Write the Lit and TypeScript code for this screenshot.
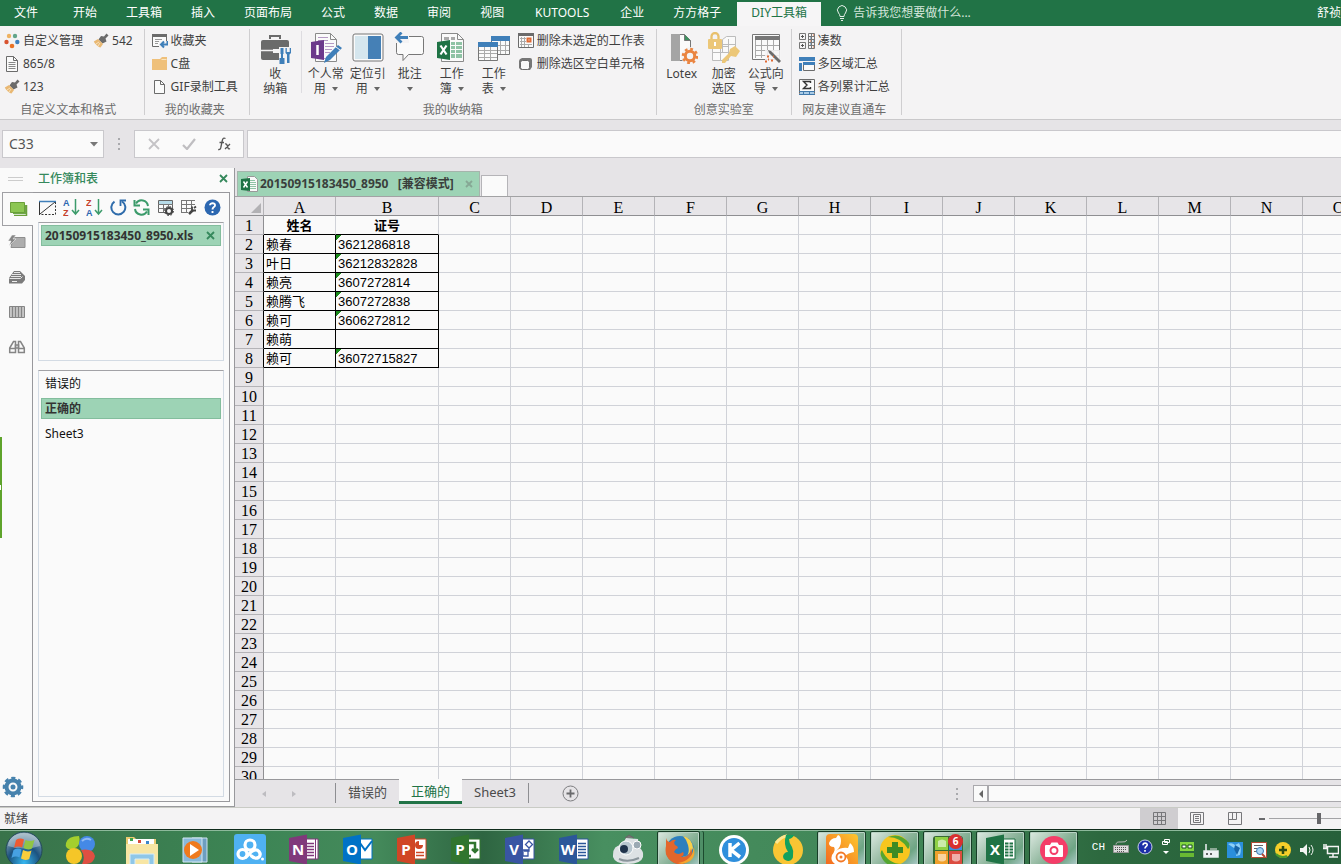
import { LitElement, html, css, svg, TemplateResult } from "lit";
import { customElement, state } from "lit/decorators.js";
import { classMap } from "lit/directives/class-map.js";

type Art = TemplateResult;

/** Wraps icon strokes in a square or rectangular SVG canvas. */
const icon = (w: number, h: number, body: unknown): Art =>
  html`<svg class="ico" width=${w} height=${h} viewBox="0 0 ${w} ${h}" aria-hidden="true">${body}</svg>`;

const GREY = "#6b6b6b";
const BLUE = "#3f7fb9";

/* ---------- small ribbon icons ---------- */
const dots = icon(16, 16, svg`
  <circle cx="5" cy="3" r="2.2" fill="#eeb262"/><circle cx="11" cy="3" r="2.2" fill="#62a58a"/>
  <circle cx="2.5" cy="9" r="2.2" fill="#d8532f"/><circle cx="8" cy="13" r="2.3" fill="#ea7326"/>
  <circle cx="13.3" cy="9" r="2.2" fill="#3f82bf"/>`);
const brush = icon(16, 16, svg`
  <path d="M13.5 0.5l2 2-3 3 1 3-4 2-4-4 2.500-3.500 3 .5z" fill="#6b6b6b"/>
  <path d="M5 6l5 5-2.500 3.500C5 14 2 11 .8 8.500z" fill="#e9b873"/><path d="M3 11l3-2M5 13l2-3" stroke="#f8e2bd"/>`);
const page = icon(16, 16, svg`
  <path d="M2.500 .5h7l4 4v11h-11z" fill="#fafafa" stroke=${GREY}/><path d="M9.500 .5v4h4" fill="none" stroke=${GREY}/>
  <path d="M4.500 6.500h7M4.500 8.500h7M4.500 10.500h7M4.500 12.500h7" stroke="#888"/>`);
const blank = icon(16, 16, svg`
  <path d="M2.500 1.500h6l4 4v9h-10z" fill="#fafafa" stroke=${GREY}/><path d="M8.500 1.500v4h4" fill="none" stroke=${GREY}/>`);
const fav = icon(16, 16, svg`
  <path d="M.5 1.500h14v12H.5z" fill="#fafafa" stroke=${GREY}/><path d="M0 1h15v3H0z" fill=${GREY}/>
  <path d="M3 6.500h7M3 8.500h5M3 10.500h3" stroke="#999"/><path d="M7 8h9v8H7z" fill="#f4f3f4"/>
  <path d="M15.500 8v3.500H9M12 8.500l-3 3 3 3" fill="none" stroke=${BLUE} stroke-width="2"/>`);
const folder = icon(16, 16, svg`<path d="M0 3h8l2-2h5v13H0z" fill="#efc07a"/><path d="M9.500 3.500h5" stroke="#fae4bf"/>`);
const calDel = icon(16, 16, svg`
  <path d="M.5 .5h15v14H.5z" fill="#fafafa" stroke=${GREY}/><path d="M0 0h16v3H0z" fill=${GREY}/>
  <path d="M2 5.500h6M2 8.500h6M2 11.500h12M3.500 4v10M6.500 4v10M10.500 11v3" stroke="#aaa"/><path d="M9.500 5.500h3v3h-3z" fill="#fff" stroke="#e06a35" stroke-width="2"/>`);
const cube = icon(16, 16, svg`
  <path d="M1 5q0-2 3-3h8q2 0 2 2v7l-2 3H3l-2-2z" fill="#777"/><rect x="2.500" y="4.500" width="9" height="9" rx="2" fill="#fafafa" stroke=${GREY}/>`);
const calc4 = icon(16, 16, svg`
  <g fill="none" stroke="#777"><path d="M.5 .5h6v6h-6zM.5 9.500h6v6h-6zM9.500 .5h6v15h-6zM9.500 3.500h6M9.500 6.500h6M9.500 9.500h6M9.500 12.500h6M12.500 .5v15"/></g>
  <path d="M2 3.500h3M3.500 2v3M2 12.500h3M3.500 11v3" stroke="#555"/>
  <path d="M11 5h1M14 8h1M11 11h1" stroke=${BLUE}/><path d="M14 2h1M11 8h1M14 14h1" stroke="#e06a35"/>`);
const areas = icon(16, 16, svg`
  <path d="M0 1h16v4H0zM0 7h3v8H0z" fill=${BLUE}/><path d="M4.500 7.500h11v7h-11z" fill="#fafafa" stroke=${GREY}/><path d="M4 6h12v3H4z" fill=${BLUE}/>`);
const sigma = icon(16, 16, svg`
  <path d="M.5 .5h15v14H.5z" fill="#fafafa" stroke=${GREY}/><path d="M1 12h14v3H1z" fill="#a9cbe6"/><path d="M0 12.500h16M0 15.500h16M4.500 12v4M10.500 12v4" stroke="#4179ab"/>
  <path d="M11.500 4V2.500h-7L8 6 4.500 9.500h7V8" fill="none" stroke="#333" stroke-width="1.400"/>`);

/* ---------- large ribbon icons ---------- */
const toolbox = icon(32, 32, svg`
  <path d="M11 7V4h10v3" fill="none" stroke=${GREY} stroke-width="2"/><rect x="2" y="8" width="28" height="20" rx="2" fill=${GREY}/>
  <path d="M2 18.500h29" stroke="#f4f3f4" stroke-width="1.500"/><path d="M14 17h6v4h-6z" fill="#f4f3f4"/>
  <path d="M20 15h12v17H20z" fill="#f4f3f4"/>
  <path d="M21.500 16h3v6h-.5v4h1.500v6h-5v-6H22v-4h-.5z" fill=${BLUE}/><path d="M26.500 16v5l1.500 1.500V31h2.500v-8.500L32 21v-5h-1.300v4h-2.900v-4z" fill=${BLUE}/>`);
const notePen = icon(32, 32, svg`
  <path d="M5.500 1.500h15l6 6v22h-21z" fill="#fafafa" stroke="#8a8a8a"/><path d="M20.500 1.500v6h6" fill="none" stroke="#8a8a8a"/>
  <path d="M8 5.500h10M8 8.500h10M15 11.500h9M15 14.500h9M15 17.500h7M15 20.500h5M8 26.500h8" stroke="#b59ac4"/>
  <path d="M1 10l13-2v20l-13-2z" fill="#6c3a8c"/><path d="M7.500 13v10" stroke="#fff" stroke-width="2.500"/>
  <path d="M14 31l2-6 12-12 4 3-12 12z" fill=${BLUE}/><path d="M26 15l4 3" stroke="#f4f3f4"/>`);
const pane = icon(32, 32, svg`
  <rect x="1" y="2" width="30" height="27" rx="2" fill="#fafafa" stroke="#777"/><path d="M3 4h13v23H3z" fill="#d5e6ee"/><path d="M16 4h13v23H16z" fill="#4580b6"/>`);
const comment = icon(32, 32, svg`
  <path d="M5 4.500h22.500a2 2 0 0 1 2 2v14a2 2 0 0 1-2 2H14.500l-5.500 6v-6H4.500a2 2 0 0 1-2-2V7z" fill="#fafafa" stroke="#777"/>
  <path d="M0 0h15v11H0z" fill="#f4f3f4"/><path d="M14 5.500H3M7.500 .5l-5 5 5 5" fill="none" stroke=${BLUE} stroke-width="2.800"/>`);
const excelPage = icon(32, 32, svg`
  <path d="M5.500 1.500h16l6 6v22h-22z" fill="#fafafa" stroke="#8a8a8a"/><path d="M21.500 1.500v6h6" fill="none" stroke="#8a8a8a"/>
  <path d="M8 5h5v3H8zM15 5h4v3h-4z" fill="#aaa"/>
  <g fill="#8fc3a5"><path d="M15 10h4v3h-4zM20 10h6v3h-6zM15 14h4v3h-4zM20 14h6v3h-6zM15 18h4v3h-4zM20 18h6v3h-6zM15 22h4v4h-4zM20 22h6v4h-6z"/></g>
  <path d="M1 10l13-2v20l-13-2z" fill="#1f7345"/><path d="M4.500 13.500l6 9M10.500 13.500l-6 9" stroke="#fff" stroke-width="2.200"/>`);
const tables = icon(32, 32, svg`
  <path d="M13.500 4.500h18v18h-18z" fill="#fafafa" stroke="#777"/><path d="M13 4h19v5H13z" fill=${BLUE}/>
  <path d="M14 13.500h17M14 18.500h17M22.500 9v13M27.500 9v13" stroke="#aaa"/>
  <path d="M.5 10.500h19v18H.5z" fill="#fafafa" stroke="#777"/><path d="M0 10h20v5H0z" fill=${BLUE}/>
  <path d="M1 18.500h18M1 21.500h18M1 25.500h18M6.500 15v13M12.500 15v13" stroke="#aaa"/>`);
const lotex = icon(32, 32, svg`
  <path d="M5.500 2.500h13l6 6v20h-19z" fill="#fafafa" stroke="#777"/><path d="M5 2h9v27H5z" fill="#a5a5a5"/><path d="M18.500 2.500v6h6" fill="#3e9160" stroke="#777"/>
  <circle cx="24" cy="24" r="9" fill="#f4f3f4"/>
  <circle cx="24" cy="24" r="4.700" fill="none" stroke="#ea8440" stroke-width="3"/>
  <circle cx="24" cy="24" r="7" fill="none" stroke="#ea8440" stroke-width="2.500" stroke-dasharray="2.750 2.750"/>`);
const lockKey = icon(32, 32, svg`
  <g fill="#fafafa" stroke="#bcbcbc"><path d="M4.500 14.500h8v6h-8zM12.500 14.500h8v6h-8zM4.500 20.500h8v8h-8zM12.500 20.500h8v8h-8zM14.500 7.500l4-3h9v13l-4 3h-9zM20.500 7v13M14 12.500h13"/></g>
  <path d="M3.500 9V4.500a3.500 3.500 0 0 1 7 0V9" fill="none" stroke="#e8c06c" stroke-width="2.300"/><rect x="0" y="7" width="14" height="10" rx="1" fill="#ecc778"/><path d="M7 10v4" stroke="#fff" stroke-width="2"/>
  <path d="M22 17l5-3 5 5-4 6-5-1-6 7h-3v-3l7-7z" fill="#ecc778"/>`);
const wizard = icon(32, 32, svg`
  <path d="M2.500 2.500h27v25h-27z" fill="#fafafa" stroke="#777"/><path d="M5 4h24v4H5z" fill="#777"/>
  <path d="M5 13.500h24M5 18.500h24M5 23.500h24M5.500 8v18M11.500 8v18M17.500 8v18M23.500 8v18" stroke="#aaa"/>
  <path d="M15 18h16v14H15z" fill="#f4f3f4" opacity=".85"/><path d="M18 18l3 1 10 10-2 2-10-10z" fill=${GREY}/>
  <path d="M17 24.500h2M21 28.500h2M15 29.500h2M23 24.500h1M18 27.500h1" stroke="#e06a35" stroke-width="2"/>`);

/* ---------- side panel icons ---------- */
const sheets = icon(18, 14, svg`<path d="M3 3h13v9H3z" fill="#6fa84a"/><path d="M.500 .500h14v10H.500z" fill="#8cc653" stroke="#6a9f3a"/><path d="M16.500 3v10.500H4" fill="none" stroke="#6a9f3a" stroke-width="1.500"/>`);
const auto = icon(18, 14, svg`<path d="M5 2.500h12v10H3z" fill="#adadad" stroke="#8e8e8e"/><path d="M4 0l4 0-3 4h3L1 11l2-5H0z" fill="#868686" stroke="#fafafa" stroke-width=".5"/>`);
const stack = icon(18, 14, svg`<path d="M1 8l5-7h6l5 5v4l-3 3.500H1z" fill="#7b7b7b"/><path d="M1.500 8.500h11l2-2M3 6.500h10M4 4.500h9M6 2.500h6" fill="none" stroke="#e6e6e6"/><path d="M4 11.500h5" stroke="#eee"/>`);
const cols = icon(18, 14, svg`<path d="M1.500 1.500h15v11h-15z" fill="#c6c6c6" stroke="#858585"/><path d="M4.500 1v12M7.500 1v12M10.500 1v12M13.500 1v12" stroke="#858585" stroke-width="1.200"/>`);
const binoc = icon(18, 14, svg`<g fill="none" stroke="#858585" stroke-width="1.500"><path d="M5.500 1.500h2v11H1.700V8zM12.500 1.500h-2v11h5.800V8z"/><path d="M7.500 5h3v3h-3zM2 8.500h5M11 8.500h5"/></g>`);
const gear = icon(22, 22, svg`<circle cx="11" cy="11" r="6.500" fill="#fafafa" stroke="#4682ad" stroke-width="4"/><circle cx="11" cy="11" r="9" fill="none" stroke="#4682ad" stroke-width="2.600" stroke-dasharray="4.070 3" stroke-dashoffset="2"/><circle cx="11" cy="11" r="2.500" fill="#4682ad"/>`);

const rectDash = icon(17, 16, svg`<path d="M.500 15V1.500h16" fill="none" stroke="#333"/><path d="M16.500 2v12.500H1" fill="none" stroke="#333" stroke-dasharray="2 1.500"/><path d="M1 14L16 2" stroke="#333"/><path d="M0 1.500h17" stroke=${BLUE} stroke-width="1.500"/>`);
const sortIcon = (a: string, b: string, ca: string, cb: string) => icon(17, 21, svg`
  <text x="0" y="9" class="az" fill=${ca}>${a}</text><text x="0" y="19" class="az" fill=${cb}>${b}</text>
  <path d="M12.500 2v15M9 13l3.500 4 3.500-4" fill="none" stroke="#3c9b6b" stroke-width="1.500"/>`);
const undo = icon(17, 17, svg`<path d="M4.500 2.600A7 7 0 1 0 12 2.500" fill="none" stroke="#2f6cab" stroke-width="2"/><path d="M10.500 7V1.500H16" fill="none" stroke="#2f6cab" stroke-width="1.800"/>`);
const refresh = icon(17, 17, svg`<g fill="none" stroke="#3c9b6b" stroke-width="2"><path d="M15 7A6.500 6.500 0 0 0 3 4.500M2 10a6.500 6.500 0 0 0 12 2.500"/><path d="M1.500 1v5.500H7M15.500 16v-5.500H10"/></g>`);
const tblGear = icon(17, 17, svg`<path d="M1.500 1.500h14v12h-14z" fill="#fafafa" stroke="#666"/><path d="M2 2h13v3H2z" fill="#b7dbe8"/><path d="M1 5.500h15M1 9.500h10M6.500 5v8M11.500 5v3" stroke="#777"/><circle cx="12" cy="12" r="3" fill="#fafafa" stroke="#444" stroke-width="2"/><circle cx="12" cy="12" r="4.500" fill="none" stroke="#444" stroke-dasharray="1.760 1.760"/>`);
const tblTool = icon(17, 17, svg`<path d="M1 1.500h14M1 5.500h14M1 9.500h10M1 13.500h7M1.500 1v13M6.500 1v12M11.500 1v8" stroke="#777"/><path d="M9 15l4-4" stroke="#444" stroke-width="2.500"/><path d="M12 7.500l0 4 4 0M16 7.500l-2 1.500" stroke="#444" stroke-width="1.800" fill="none"/>`);
const help = icon(17, 17, svg`<circle cx="8.500" cy="8.500" r="8" fill="#2c67b0"/><path d="M6 6.300C6 3.500 11.300 3.500 11 6.500 10.800 8.300 8.500 8 8.500 10.500M8.500 12v2" fill="none" stroke="#fff" stroke-width="1.900"/>`);
const cross = (c: string, s: number) => icon(s, s, svg`<path d="M1 1l${s - 2} ${s - 2}M${s - 1} 1L1 ${s - 1}" stroke=${c} stroke-width="1.800"/>`);
const xlsTab = icon(17, 16, svg`<path d="M6.500 .5h7l3 3v12h-10z" fill="#fafafa" stroke="#999"/><path d="M9 4.500h5M9 6.500h6M9 8.500h6M9 10.500h6M9 12.500h6" stroke="#8fc3a5"/><path d="M0 3l9-1v13l-9-1z" fill="#1f7345"/><path d="M2.500 5.500l4 6M6.500 5.500l-4 6" stroke="#fff" stroke-width="1.500"/>`);

/* ---------- taskbar icons ---------- */
const office = (letter: string, color: string, art: unknown) => icon(30, 32, svg`
  <path d="M14 5h15v20H14z" fill="#fff" stroke=${color}/>${art}
  <path d="M0 4l18-3.500v30L0 27z" fill=${color}/><text x="9" y="21" class="letter" fill="#fff">${letter}</text>`);
const orb = icon(38, 38, svg`
  <defs><radialGradient id="orb" cx=".5" cy=".85" r=".8"><stop offset="0" stop-color="#35b7f0"/><stop offset=".55" stop-color="#1c527f"/><stop offset="1" stop-color="#8ca5b4"/></radialGradient></defs>
  <circle cx="19" cy="19" r="18" fill="url(#orb)" stroke="#21485a"/><path d="M3 15a16 13 0 0 1 32 0q-16 5-32 0z" fill="#dbe9ee" opacity=".4"/>
  <path d="M11 9q4-2.500 8-.5l-2 8q-4-2-8 .5z" fill="#ee5a32"/><path d="M20.500 9q4 2 9 0l-2.500 8.500q-4 2-8.500-.5z" fill="#91c544"/>
  <path d="M8.500 19q4-2.500 8-.5l-2 8q-4-2-8 .5z" fill="#47a1e2"/><path d="M18 19q4.500 2.500 8.500 .5l-2.300 8.500q-4 2-8.200-.5z" fill="#fbce3c"/>`);
const balls = icon(32, 32, svg`<path d="M2 9q2-7 13-7 2 7-2 11-6 4-10 1-2-2-1-5z" fill="#a4cf2e"/><circle cx="23" cy="10" r="8" fill="#4489e6"/><circle cx="10" cy="22" r="8" fill="#f5c628"/><path d="M17 16q12-2 14 6-1 9-13 8 4-7-1-14z" fill="#df4f42"/><path d="M18 7q4-4 9-1" stroke="#8fbaf4" stroke-width="2" fill="none"/>`);
const explorer = icon(34, 34, svg`<path d="M1 3h8l2 2h20v26H1z" fill="#e9ca70"/><path d="M3 5h26v5H3z" fill="#fff"/><path d="M5 4h3v3H5z" fill="#3da54c"/><path d="M13 6h3v3h-3z" fill="#d64b3c"/><path d="M21 7h3v3h-3z" fill="#3c86cb"/><path d="M1 10h32v21H1z" fill="#f8e6a4"/><path d="M5 31V20h24v11h-5v-6H10v6z" fill="#8fc7e8" stroke="#d7edf7"/>`);
const player = icon(32, 32, svg`<path d="M12 4h15v24H12z" fill="#6d9ec0" stroke="#cfe2ee"/><path d="M3 4h19v24H3z" fill="#8ab9da" stroke="#d5e8f2"/><circle cx="13" cy="16" r="9" fill="#ef7a1d"/><path d="M10 10l9 6-9 6z" fill="#fff"/>`);
const cloud = icon(32, 32, svg`<rect width="32" height="34" rx="3" fill="#4fb1f2"/><g fill="none" stroke="#fff" stroke-width="3.200" stroke-linecap="round"><circle cx="16" cy="11" r="5"/><circle cx="8.500" cy="20" r="4.500"/><path d="M12 23l5-5q5-4 8-.5 2.500 3.500-.5 6-3.500 2-7-1.500"/></g><circle cx="28.500" cy="25" r="1.500" fill="#fff"/>`);
const robot = icon(32, 32, svg`<path d="M1 21q0-10 9-10l4-7 12 1 1 8q5 4 4 10-2 7-15 7T1 23z" fill="#dde1e4"/><circle cx="14" cy="14" r="7" fill="#b8c6cf" stroke="#fff"/><circle cx="12" cy="15" r="4" fill="#20334c"/><circle cx="25" cy="11" r="4" fill="#9caab4" stroke="#fff"/><path d="M13 4l4-3 5 3" stroke="#666" fill="#777"/><path d="M7 25q9 4 20-1" stroke="#8a949b" stroke-width="2" fill="none"/>`);
const firefox = icon(32, 32, svg`<circle cx="17" cy="16" r="14" fill="#2d7fbe"/><path d="M20 2q9 2 10 12-3 8-11 9 9 0 6-12-1-5-5-9z" fill="#f6cf4c"/><path d="M3 4q1 4 4 4 3-3 6-2-3 2-1 5 3 1 3 3-3 1-4 4 4 4 9 0 2 3-2 5 9 1 10-9 3 9-4 14-8 5-16-1Q1 22 3 12z" fill="#e3662a"/><path d="M26 24q4-3 4.500-11 3 9-3.500 14-6 4-12 2 7-1 11-5z" fill="#f5a52d"/>`);
const kugou = icon(32, 32, svg`<circle cx="16" cy="16" r="15" fill="#fff"/><circle cx="16" cy="16" r="12" fill="#2f8fdc"/><path d="M12 9v14M21.500 9L13 16l9 7" fill="none" stroke="#fff" stroke-width="3.500"/>`);
const music = icon(32, 32, svg`<circle cx="16" cy="16" r="15" fill="#f9c534"/><path d="M4 9q6-7 11-7" stroke="#fde68f" stroke-width="3" fill="none"/><path d="M14 1h8q-1 3-5 4 0 4 3 8 2 4 1 9a5 4.500 0 1 1-5-4Q11 11 14 1z" fill="#13a05e"/>`);
const squirrel = icon(32, 32, svg`<defs><linearGradient id="uc" x1="0" y1="1" x2="1" y2="0"><stop offset="0" stop-color="#f3641f"/><stop offset="1" stop-color="#fdc72e"/></linearGradient></defs><rect width="32" height="34" rx="4" fill="url(#uc)"/><path d="M3 9q2-5 7-5l2-3q3 1 3 6 0 6-5 10 5-4 12-3l2-5q4 3 4 9-6 1-9 4 4 3 3 8H9q-5-3-3-9 4-5 2-8-5 0-5-4z" fill="#fff"/><circle cx="15" cy="23" r="4.500" fill="none" stroke="#f37a28" stroke-width="1.800"/><circle cx="15" cy="23" r="1.500" fill="#f37a28"/>`);
const plusBall = icon(32, 32, svg`<circle cx="16" cy="16" r="15" fill="#f7c61e"/><path d="M9 3q12-5 21 6 1 4-1 6-7-12-20-12zM23 30Q8 36 2 22q-1-4 1-6 6 14 20 14z" fill="#55a630"/><path d="M13 8h6v5h5v6h-5v5h-6v-5H8v-6h5z" fill="#3d8b24"/>`);
const squares = icon(32, 32, svg`<rect x="1" y="2" width="30" height="29" rx="3" fill="#386b35"/><rect x="3" y="3" width="13" height="13" fill="#8fd045"/><rect x="17" y="3" width="13" height="13" fill="#3d8de0"/><rect x="3" y="17" width="13" height="13" fill="#f0a02c"/><rect x="17" y="17" width="13" height="13" fill="#dc4c40"/><path d="M6 7q4-3 8 0v6H6zM6 20h8v6q-4 3-8 0zM20 20h8v6q-4 3-8 0z" fill="#fff" opacity=".55"/>`);
const camera = icon(32, 32, svg`<circle cx="16" cy="16" r="14" fill="#f43d68"/><path d="M8 11h4l1.500-2.500h6L21 11h3a1 1 0 0 1 1 1v10a1 1 0 0 1-1 1H8a1 1 0 0 1-1-1V12a1 1 0 0 1 1-1z" fill="#fff"/><circle cx="16" cy="16.500" r="3.500" fill="#fff" stroke="#f43d68" stroke-width="2"/>`);

const lines = svg`<path d="M19 9.500h8M19 12.500h8M19 15.500h8M19 18.500h8M19 21.500h8" stroke="#2b579a" stroke-width="1.500"/>`;
const xlArt = svg`<path d="M19 9.500h8M19 12.500h8M19 15.500h8M19 18.500h8M19 21.500h8" stroke="#1f7345" stroke-width="2" stroke-dasharray="3.500 1"/>`;
const noteArt = svg`<path d="M18 9.500h7M18 12.500h7M18 15.500h7M18 18.500h7M18 21.500h7" stroke="#80397b" stroke-width="1.500"/><path d="M26.500 5v20" stroke="#80397b"/>`;

interface TaskItem { name: string; art: Art; open?: boolean; badge?: string }
const pinned: TaskItem[] = [
  { name: "文件夹", art: explorer }, { name: "播放器", art: player }, { name: "云盘", art: cloud },
  { name: "OneNote", art: office("N", "#80397b", noteArt) },
  { name: "Outlook", art: office("O", "#0072c6", svg`<path d="M17 9l5 7 7-9" fill="none" stroke="#0072c6" stroke-width="2"/>`) },
  { name: "PowerPoint", art: office("P", "#d04626", svg`<circle cx="22" cy="11" r="4" fill="#d04626"/><path d="M22 11V6h5v5z" fill="#fff"/><path d="M19 18.500h8M19 21.500h8" stroke="#d04626" stroke-width="1.500"/>`) },
  { name: "Project", art: office("P", "#31752f", svg`<path d="M18 9h6v8M21 15l3 3 3-3M20 22h-2" fill="none" stroke="#31752f" stroke-width="2.500"/>`) },
  { name: "Visio", art: office("V", "#3955a3", svg`<path d="M24 7l3.500 3.500L24 14l-3.500-3.500zM24 14v3h-5M18 16h5v6h-5z" fill="none" stroke="#3955a3" stroke-width="1.300"/>`) },
  { name: "Word", art: office("W", "#2b579a", lines) },
  { name: "助手", art: robot },
];
const running: TaskItem[] = [
  { name: "浏览器", art: squirrel, open: true }, { name: "安全卫士", art: plusBall, open: true },
  { name: "软件管家", art: squares, open: true, badge: "6" },
  { name: "Excel", art: office("X", "#1f7345", xlArt), open: true }, { name: "录屏", art: camera, open: true },
];

const tray: Art[] = [
  icon(16, 16, svg`<path d="M1 0h14v9H1z" fill="#83d541"/><path d="M3 3h4v3H3zM9 3h4v3H9z" fill="#fff" stroke="#174f22"/><path d="M1 11h14v4H1z" fill="#69b933"/>`),
  icon(16, 16, svg`<path d="M3 2v7M1 9h14v6H1z" fill="#eef1f3" stroke="#eef1f3" stroke-width="1.500"/><path d="M3 12h2M7 12h2" stroke="#333" stroke-width="1.500"/><path d="M7 7h7" stroke="#eee"/>`),
  icon(16, 16, svg`<path d="M0 0h16v16H0z" fill="#2a8fdd"/><path d="M1 2q4-2 7 1l4-2q3 5 1 12l-4 1q1-4-2-8z" fill="#8ed0f8"/><path d="M8 3l5 3-3 7-3-6z" fill="#1765a8"/>`),
  icon(16, 16, svg`<path d="M.500 .500h15v15H.500z" fill="#fff" stroke="#b34832"/><path d="M3 3.500h9M3 6.500h3M3 9.500h3" stroke="#666"/><circle cx="9" cy="9" r="3.500" fill="#a9d5f4" stroke="#3b78b5"/><path d="M11 12l3 3" stroke="#b34832" stroke-width="2"/>`),
  icon(16, 16, svg`<circle cx="8" cy="8" r="8" fill="#f6cf2a"/><path d="M8 4v8M4 8h8" stroke="#2e4d12" stroke-width="2.500"/><path d="M1 12q5 5 11 2" stroke="#4d9b2c" stroke-width="2" fill="none"/>`),
  icon(16, 16, svg`<path d="M1 6h3l4-4v12l-4-4H1z" fill="#f4f4f4"/><path d="M10 5q2 3 0 6M12 3q4 5 0 10" fill="none" stroke="#f4f4f4"/>`),
  icon(16, 16, svg`<path d="M4.500 4.500h11v7h-11zM10 12v3M6 15h9M1 2v5M3 2v5M0 6.500h4" fill="none" stroke="#f4f4f4" stroke-width="1.500"/>`),
];

const TABS = ["开始", "工具箱", "插入", "页面布局", "公式", "数据", "审阅", "视图", "KUTOOLS", "企业", "方方格子", "DIY工具箱"];
const COLUMNS = "ABCDEFGHIJKLMNO".split("");
const ROWS = Array.from({ length: 30 }, (_, i) => i + 1);
const DATA: Record<number, [string, string]> = {
  1: ["姓名", "证号"], 2: ["赖春", "3621286818"], 3: ["叶日", "36212832828"], 4: ["赖亮", "3607272814"],
  5: ["赖腾飞", "3607272838"], 6: ["赖可", "3606272812"], 7: ["赖萌", ""], 8: ["赖可", "36072715827"],
};
const SHEETS = ["错误的", "正确的", "Sheet3"];

@customElement("app-root")
export class AppRoot extends LitElement {
  @state() private tab = "DIY工具箱";
  @state() private sheet = "正确的";

  static styles = css`
    :host { display: flex; flex-direction: column; height: 100vh; overflow: hidden; background: #fafafa; color: #3f3f3f;
      font: 12px/16px "Noto Sans", "Noto Sans CJK SC", sans-serif; }
    * { box-sizing: border-box; }
    button, input { font: inherit; color: inherit; margin: 0; padding: 0; border: 0; background: none; outline: none; }
    button { display: flex; align-items: center; justify-content: center; white-space: nowrap; flex: none; }
    .ico { display: block; flex: none; }
    .az { font: 700 9px "Liberation Sans", sans-serif; }
    .letter { font: 700 15px "Open Sans", sans-serif; text-anchor: middle; }
    .caret { border: 3px solid transparent; border-top: 4px solid #666; border-bottom: 0; }

    .tabs { display: flex; flex: none; height: 26px; gap: 3px; background: #217346; color: #fff; white-space: nowrap; overflow: hidden; }
    .tabs button { min-width: 50px; padding: 0 13px; }
    .tabs .file { padding: 0 19px 0 14px; }
    .tabs .latin { min-width: 84px; }
    .tabs .on { background: #f6f5f6; color: #217346; margin-top: 2px; padding-bottom: 2px; }
    .tell { display: flex; align-items: center; gap: 5px; margin-left: 12px; color: #d5e6dc; }
    .tell input { width: 160px; }
    .tell input::placeholder { color: #d5e6dc; opacity: 1; }
    .user { margin-left: auto; color: #fff; text-decoration: none; align-self: center; }

    .ribbon { display: flex; flex: none; height: 94px; padding-top: 3px; background: #f4f3f4; border-bottom: 1px solid #c9c8ca; }
    .group { display: flex; flex-direction: column; flex: none; border-right: 1px solid #cfced0; margin-bottom: 4px; }
    .tools { display: flex; flex: none; height: 69px; }
    .caption { flex: none; text-align: center; color: #6c6c6c; line-height: 24px; height: 17px; }
    .stack { display: flex; flex-direction: column; align-items: flex-start; }
    .small { height: 23px; gap: 3px; }
    .big { flex-direction: column; justify-content: flex-start; width: 42px; padding-top: 3px; gap: 2px; line-height: 15px; white-space: normal; }
    .big .cap { display: flex; flex-direction: column; align-items: center; white-space: nowrap; }
    .big .cap span { display: flex; align-items: center; gap: 6px; min-height: 15px; }
    .g1 { padding-left: 4px; padding-right: 11px; }
    .g1 .tools { gap: 10px; }
    .g2 { padding: 0 11px 0 7px; }
    .g3 .first { width: 51px; }
    .rule { width: 1px; height: 62px; background: #dddce0; margin: 2px 3px 0 0; }
    .g3 .stack { padding: 0 11px 0 3px; }
    .g4 { padding: 0 4px; }
    .g5 { padding: 0 11px 0 7px; }

    .formula { display: flex; flex: none; height: 48px; padding: 10px 0 10px 2px; background: #e6e4e7; }
    .box { display: flex; align-items: center; background: #fafafa; border: 1px solid #c9c8cc; }
    .name { width: 102px; padding: 0 5px 0 6px; }
    .name input { flex: 1; min-width: 0; font-size: 14px; color: #555; }
    .vdots { width: 30px; display: flex; justify-content: center; align-items: center; }
    .edit { width: 110px; justify-content: space-around; padding: 0 1px; margin-right: 3px; }
    .edit button { width: 20px; height: 20px; }
    .bar { flex: 1; min-width: 0; border-right: 0; }
    .bar input { width: 100%; height: 100%; }

    .main { display: flex; flex: 1; min-height: 0; }
    .side { position: relative; display: flex; flex-direction: column; width: 235px; flex: none; background: #fafafa; border-right: 1px solid #98989c; border-bottom: 1px solid #98989c; }
    .sidehead { display: flex; align-items: center; height: 24px; flex: none; padding: 0 6px 3px 8px; color: #35895c; font-weight: 500; }
    .grip { width: 15px; height: 4px; border: 1px solid #ccc; border-width: 1px 0; margin-right: 15px; }
    .sidehead button { margin-left: auto; }
    .sidebody { display: flex; flex: 1; min-height: 0; padding: 0 4px 4px 2px; }
    .rail { display: flex; flex-direction: column; width: 30px; flex: none; align-items: flex-start; }
    .rail button { width: 30px; height: 35px; padding-bottom: 4px; }
    .rail .on { width: 31px; height: 34px; border: 1px solid #a0a0a4; border-right: 0; background: #fafafa; padding: 0 0 0 2px; position: relative; }
    .rail .gear { margin-top: auto; width: 22px; height: 30px; padding-bottom: 0; }
    .frame { display: flex; flex-direction: column; flex: 1; min-width: 0; border: 1px solid #98989c; padding: 0 5px 4px; }
    .bartools { display: flex; align-items: center; justify-content: space-between; height: 29px; flex: none; padding: 0 3px 0 1px; }
    .list { border: 1px solid #d3dbe4; border-top-color: #a2a2a6; padding: 2px; display: flex; flex-direction: column; gap: 4px; color: #111; }
    .books { height: 139px; flex: none; margin-bottom: 9px; }
    .sheets { flex: 1; }
    .entry { height: 21px; justify-content: flex-start; padding: 0 5px 0 4px; border: 0; width: 100%; }
    .entry.on { background: #9dd3b5; border: 1px solid #83bd9d; color: #333; font-weight: 700; padding-left: 3px; }
    .entry .ico { margin-left: auto; }
    .notch { position: absolute; left: 0; top: 269px; width: 2px; height: 101px; background: #5ea32b; }
    .notch::after { content: ""; position: absolute; top: 48px; left: 0; width: 1px; height: 5px; background: #fff; }

    .work { display: flex; flex-direction: column; flex: 1; min-width: 0; }
    .doctabs { display: flex; align-items: flex-end; height: 29px; flex: none; background: #e6e4e7; border-bottom: 1px solid #a2a2a4; padding-left: 2px; gap: 1px; }
    .doc { height: 25px; gap: 2px; padding: 0 6px 0 3px; background: #9dd3b5; border: 1px solid #a5b5ac; border-bottom: 0; color: #3a3f3c; font-weight: 700; white-space: pre; }
    .doc .ico:last-child { margin-left: 9px; }
    .newdoc { width: 27px; height: 21px; background: #fafafa; border: 1px solid #b5b4b8; border-bottom: 0; }
    .gridwrap { flex: 1; min-height: 0; overflow: hidden; background: #fafafa; }
    table { border-collapse: separate; border-spacing: 0; table-layout: fixed; width: 1140px; color: #000; font: 13px/16px "Liberation Sans", "Noto Sans CJK SC", sans-serif; }
    th, td { height: 19px; padding: 2px 0 0; border: 0 solid #d0d2d8; border-width: 0 1px 1px 0; overflow: hidden; white-space: nowrap; }
    th { font: 16px/16px "Liberation Serif", "Noto Sans CJK SC", serif; background: #e7e5e8; border-color: #b4b3b7; }
    thead th { border-bottom-color: #8f8f92; padding-top: 3px; line-height: 15px; }
    tbody th { border-right-color: #8f8f92; }
    td { padding-left: 2px; }
    .rownum { width: 29px; }
    .corner { display: flex; justify-content: flex-end; padding-right: 2px; }
    .corner::after { content: ""; border: 5px solid transparent; border-right-color: #b2b1b4; border-bottom-color: #b2b1b4; }
    .ca { width: 72px; } .cb { width: 103px; } .cn { width: 72px; }
    .head { font-weight: 700; text-align: center; padding-left: 0; border-bottom-color: #000; }
    .cell { border-color: #000; }
    tbody .edge { border-right-color: #000; }
    .text { background: linear-gradient(135deg, #1b8a1b 4px, transparent 4px) no-repeat; }

    .sheetbar { display: flex; height: 28px; flex: none; background: #e6e4e7; border-top: 1px solid #98989b; font-size: 13px; }
    .arrows { display: flex; width: 100px; align-items: center; padding-left: 26px; gap: 20px; flex: none; }
    .sheetbar .tab { height: 24px; padding: 0 12px 1px; color: #4b4b4b; }
    .sheetbar .tab.on { margin-top: -1px; height: 25px; background: #fafafa; color: #217346; border-bottom: 3px solid #217346; padding: 2px 12px 0; }
    .tick { width: 1px; height: 20px; background: #8e8e92; margin-top: 3px; }
    .add { width: 20px; height: 26px; margin-left: 31px; }
    .scroll { display: flex; width: 368px; height: 17px; margin: 5px 0 0 14px; border: 1px solid #a9a8ac; border-right: 0; background: #fafafa; }
    .scroll button { width: 15px; border-right: 2px solid #a9a8ac; }
    .more { margin-left: auto; display: flex; align-items: center; }

    .status { display: flex; flex: none; height: 22px; align-items: center; padding-left: 4px; background: #f4f3f4; border-top: 1px solid #c9cbc5; }
    .views { display: flex; margin-left: auto; height: 100%; }
    .views button { width: 38px; }
    .views .on { background: #cfcdd0; }
    .minus { width: 6px; height: 2px; background: #6a6a6d; margin: 0 4px 0 5px; }
    input[type="range"] { appearance: none; width: 72px; height: 16px; background: linear-gradient(#a3a3a6, #a3a3a6) center / 100% 1px no-repeat; }
    input[type="range"]::-webkit-slider-thumb { appearance: none; width: 4px; height: 11px; background: #666669; }

    .taskbar { display: flex; flex: none; height: 35px; overflow: hidden; border-top: 1px solid #0f2b1b; box-shadow: inset 0 1px #8db99b;
      background: linear-gradient(90deg, #39734a, #3c8454 18%, #448a5b 28%, #2e6541 36%, #488f60 45%, #3f8455 70%, #2d693f 82%, #26603a); }
    .taskbar button { align-items: flex-start; width: 54px; height: 40px; padding-top: 4px; }
    .taskbar .start { width: 53px; justify-content: flex-start; padding: 1px 0 0 5px; }
    .pins { display: flex; margin-left: 8px; }
    .taskbar .open { position: relative; width: 49px; margin: 1px 2px; border: 1px solid #173d27; border-radius: 2px; padding-top: 2px; box-shadow: inset 0 0 0 1px #b9d3c4;
      background: linear-gradient(135deg, #dce9e1 0%, #8cb49a 50%, #6ea584 70%, #bed4dc 100%); }
    .taskbar .fox { width: 43px; margin: 1px 7px 0 2px; box-shadow: inset 0 0 0 1px #b9d3c4, 3px 0 #4f8f67, 4px 0 #1c4a2e; }
    .badge { position: absolute; top: 2px; right: 8px; width: 15px; height: 15px; border-radius: 8px; background: #d8302f; color: #fff; font: 700 10px/15px "Open Sans", sans-serif; text-align: center; }
    .tray { display: flex; margin-left: auto; color: #fff; align-items: center; gap: 8px; padding-top: 5px; margin-right: 2px; }
    .lang { display: flex; align-items: center; gap: 8px; align-self: flex-start; font: 11px/24px "Liberation Mono", monospace; }
  `;

  private small(art: Art, label: string) {
    return html`<button class="small">${art}<span>${label}</span></button>`;
  }

  private big(art: Art, top: string, bottom = "", menu = false, extra = "") {
    return html`<button class="big ${extra}">${art}<span class="cap"><span>${top}</span>
      ${bottom || menu ? html`<span>${bottom}${menu ? html`<i class="caret"></i>` : ""}</span>` : ""}</span></button>`;
  }

  private cells(row: number) {
    const data = DATA[row];
    return COLUMNS.map((_, i) => {
      const value = data && i < 2 ? data[i] : "";
      const cls = { head: !!data && i < 2 && row === 1, cell: !!data && i < 2 && row > 1, text: row > 1 && i === 1 && !!value };
      return html`<td class=${classMap(cls)}>${value}</td>`;
    });
  }

  private task(t: TaskItem) {
    return html`<button class=${classMap({ open: !!t.open })} aria-label=${t.name}>${t.art}${t.badge ? html`<span class="badge">${t.badge}</span>` : ""}</button>`;
  }

  private threeDots = icon(4, 14, svg`<path d="M1 1h2v2H1zM1 6h2v2H1zM1 11h2v2H1z" fill="#a9a9ad"/>`);

  render() {
    return html`
      <nav class="tabs">
        <button class="file">文件</button>
        ${TABS.map((t) => html`<button class=${classMap({ on: t === this.tab, latin: /^[A-Z]{3}/.test(t) })} @click=${() => (this.tab = t)}>${t}</button>`)}
        <label class="tell">
          ${icon(12, 16, svg`<path d="M4 11.500Q4 9.500 2.500 8a4.500 4.500 0 1 1 7 0Q8 9.500 8 11.500zM4 13.500h4M5 15.500h2" fill="none" stroke="#e4efe8"/>`)}
          <input type="text" aria-label="告诉我您想要做什么" placeholder="告诉我您想要做什么..." />
        </label>
        <a class="user" href="#account">舒祯</a>
      </nav>

      <section class="ribbon">
        <div class="group g1">
          <div class="tools">
            <div class="stack">${this.small(dots, "自定义管理")}${this.small(page, "865/8")}${this.small(brush, "123")}</div>
            <div class="stack">${this.small(brush, "542")}</div>
          </div>
          <div class="caption">自定义文本和格式</div>
        </div>
        <div class="group g2">
          <div class="tools"><div class="stack">${this.small(fav, "收藏夹")}${this.small(folder, "C盘")}${this.small(blank, "GIF录制工具")}</div></div>
          <div class="caption">我的收藏夹</div>
        </div>
        <div class="group g3">
          <div class="tools">
            ${this.big(toolbox, "收", "纳箱", false, "first")}
            <div class="rule"></div>
            ${this.big(notePen, "个人常", "用", true)}${this.big(pane, "定位引", "用", true)}${this.big(comment, "批注", "", true)}
            ${this.big(excelPage, "工作", "簿", true)}${this.big(tables, "工作", "表", true)}
            <div class="stack">${this.small(calDel, "删除未选定的工作表")}${this.small(cube, "删除选区空白单元格")}</div>
          </div>
          <div class="caption">我的收纳箱</div>
        </div>
        <div class="group g4">
          <div class="tools">${this.big(lotex, "Lotex")}${this.big(lockKey, "加密", "选区")}${this.big(wizard, "公式向", "导", true)}</div>
          <div class="caption">创意实验室</div>
        </div>
        <div class="group g5">
          <div class="tools"><div class="stack">${this.small(calc4, "凑数")}${this.small(areas, "多区域汇总")}${this.small(sigma, "各列累计汇总")}</div></div>
          <div class="caption">网友建议直通车</div>
        </div>
      </section>

      <section class="formula">
        <div class="box name">
          <input type="text" aria-label="名称框" .value=${"C33"} />
          <button aria-label="选择名称">${icon(8, 5, svg`<path d="M0 0h8L4 4.500z" fill="#777"/>`)}</button>
        </div>
        <div class="vdots">${this.threeDots}</div>
        <div class="box edit">
          <button aria-label="取消">${cross("#c4c3c6", 12)}</button>
          <button aria-label="输入">${icon(14, 12, svg`<path d="M1 7l4 4 8-10" fill="none" stroke="#bfbec1" stroke-width="2.200"/>`)}</button>
          <button aria-label="插入函数">${icon(14, 16, svg`<path d="M8.500 2.500Q6 1 5.300 4.500L3.700 12q-.5 2-2.500 1.500M2.500 6.500h4.500M8 8q1.500-.5 2 1l1 3q.5 1.500 2 .5M13 8L8 13" fill="none" stroke="#555" stroke-width="1.300"/>`)}</button>
        </div>
        <div class="box bar"><input type="text" aria-label="编辑栏" /></div>
      </section>

      <main class="main">
        <aside class="side">
          <div class="sidehead"><i class="grip"></i><span>工作簿和表</span><button aria-label="关闭窗格">${cross("#35895c", 9)}</button></div>
          <div class="sidebody">
            <div class="rail">
              <button class="on" aria-label="工作簿">${sheets}</button>
              ${[["自动图文", auto], ["名称", stack], ["列", cols], ["查找", binoc]].map(([n, a]) => html`<button aria-label=${n}>${a}</button>`)}
              <button class="gear" aria-label="设置">${gear}</button>
            </div>
            <div class="frame">
              <div class="bartools">
                ${[["选区", rectDash], ["升序", sortIcon("A", "Z", "#2c67b0", "#c5402c")], ["降序", sortIcon("Z", "A", "#c5402c", "#2c67b0")], ["还原", undo],
                  ["刷新", refresh], ["表格设置", tblGear], ["表格工具", tblTool], ["帮助", help]].map(([n, a]) => html`<button aria-label=${n}>${a}</button>`)}
              </div>
              <div class="list books"><button class="entry on">20150915183450_8950.xls${cross("#35895c", 9)}</button></div>
              <div class="list sheets">
                ${SHEETS.map((s) => html`<button class=${classMap({ entry: true, on: s === this.sheet })} @click=${() => (this.sheet = s)}>${s}</button>`)}
              </div>
            </div>
          </div>
          <i class="notch"></i>
        </aside>

        <section class="work">
          <div class="doctabs">
            <button class="doc">${xlsTab}<span>20150915183450_8950   [兼容模式]</span>${cross("#86a895", 8)}</button>
            <button class="newdoc" aria-label="新建"></button>
          </div>
          <div class="gridwrap">
            <table>
              <thead><tr>
                <th class="rownum"><div class="corner"></div></th>
                ${COLUMNS.map((c, i) => html`<th scope="col" class=${i === 0 ? "ca" : i === 1 ? "cb" : "cn"}>${c}</th>`)}
              </tr></thead>
              <tbody>
                ${ROWS.map((r) => html`<tr><th scope="row" class=${classMap({ edge: r > 1 && r < 9 })}>${r}</th>${this.cells(r)}</tr>`)}
              </tbody>
            </table>
          </div>
          <div class="sheetbar">
            <div class="arrows">
              <button aria-label="上一个">${icon(8, 8, svg`<path d="M5 1v6L1 4z" fill="#bdbcc0"/>`)}</button>
              <button aria-label="下一个">${icon(8, 8, svg`<path d="M3 1v6l4-3z" fill="#bdbcc0"/>`)}</button>
            </div>
            <i class="tick"></i>
            ${SHEETS.map((s) => html`<button class=${classMap({ tab: true, on: s === this.sheet })} @click=${() => (this.sheet = s)}>${s}</button>`)}
            <i class="tick"></i>
            <button class="add" aria-label="新工作表">${icon(17, 17, svg`<circle cx="8.500" cy="8.500" r="7.500" fill="none" stroke="#7d7d80"/><path d="M8.500 4.500v8M4.500 8.500h8" stroke="#6a6a6d" stroke-width="1.800"/>`)}</button>
            <div class="more">${this.threeDots}</div>
            <div class="scroll"><button aria-label="向左滚动">${icon(8, 8, svg`<path d="M6 0v8L2 4z" fill="#666"/>`)}</button></div>
          </div>
        </section>
      </main>

      <footer class="status">
        <span>就绪</span>
        <div class="views">
          <button class="on" aria-label="普通">${icon(13, 13, svg`<path d="M.500 .500h12v12H.500zM4.500 0v13M8.500 0v13M0 4.500h13M0 8.500h13" fill="none" stroke="#77777a"/>`)}</button>
          <button aria-label="页面布局">${icon(14, 13, svg`<path d="M.500 .500h13v12H.500zM3.500 2.500h7v8h-7zM5 4.500h4M5 6.500h4M5 8.500h4" fill="none" stroke="#77777a"/>`)}</button>
          <button aria-label="分页预览">${icon(14, 13, svg`<path d="M.500 .500h13v12H.500zM.500 7.500h8v-7M4.500 1v6" fill="none" stroke="#77777a"/>`)}</button>
        </div>
        <button aria-label="缩小"><i class="minus"></i></button>
        <input type="range" min="0" max="100" .value=${"71"} aria-label="显示比例" />
      </footer>

      <footer class="taskbar">
        <button class="start" aria-label="开始菜单">${orb}</button>
        <button aria-label="搜索助手">${balls}</button>
        <div class="pins">${pinned.map((t) => this.task(t))}</div>
        <button class="open fox" aria-label="Firefox">${firefox}</button>
        <button aria-label="酷狗">${kugou}</button>
        <button aria-label="音乐">${music}</button>
        ${running.map((t) => this.task(t))}
        <div class="tray">
          <div class="lang"><span>CH</span>
            ${icon(16, 16, svg`<path d="M.500 6.500h15v7H.500z" fill="#ddd" stroke="#999"/><path d="M2 8.500h12M2 10.500h12M4 12.500h8" stroke="#555" stroke-dasharray="1 1"/><path d="M3 5.500q0-3 5-2.500t6-2" fill="none" stroke="#bbb"/>`)}
            ${icon(16, 16, svg`<circle cx="8" cy="8" r="7" fill="#1c2fa8" stroke="#c9cee6"/><path d="M6 6.300c0-3 4.500-2.800 4.200-.3C10 7.500 8 7.300 8 9.500M8 11v1.800" fill="none" stroke="#fff" stroke-width="1.600"/>`)}
            ${icon(10, 18, svg`<path d="M3.500 1.500h5v3h-5zM1.500 3.500h5v3h-5z" fill="#2d693f" stroke="#fff"/><path d="M2 13h6l-3 3z" fill="#fff"/>`)}
          </div>
          ${tray}
        </div>
      </footer>
    `;
  }
}
